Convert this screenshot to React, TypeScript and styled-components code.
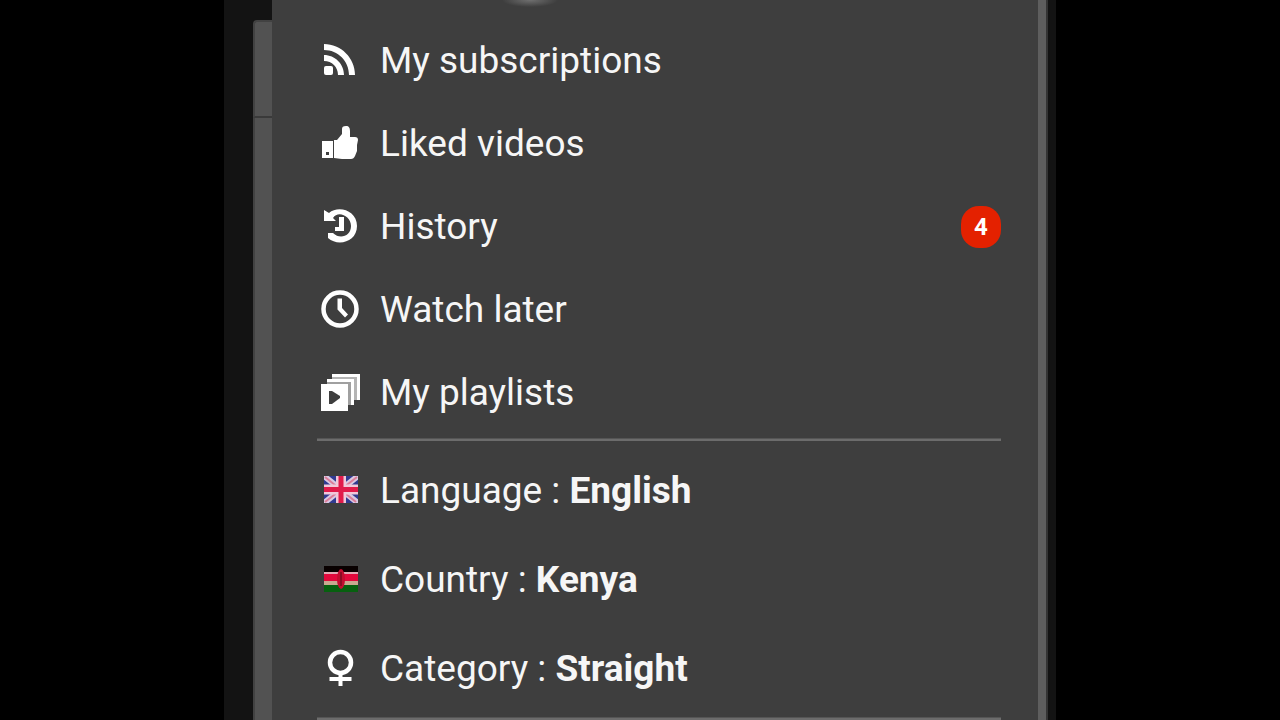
import React from "react";
import styled, { createGlobalStyle } from "styled-components";

const GlobalStyle = createGlobalStyle`
  * { box-sizing: border-box; }
  body { margin: 0; background: #000; }
`;

const Page = styled.div`
  display: flex;
  justify-content: center;
  min-height: 100vh;
  font-family: Roboto, "Liberation Sans", sans-serif;
  color: #f6f6f6;
`;

const Stage = styled.div`
  display: flex;
  width: 65%;
  padding: 0 8px 0 29px;
  background: #131313;
`;

const Rail = styled.aside`
  display: flex;
  flex-direction: column;
  flex: none;
  width: 19px;
  padding-top: 20px;
`;

const RailHeader = styled.div`
  height: 98px;
  background: #525252;
  border-top: 2px solid #424242;
  border-bottom: 2px solid #3a3a3a;
  border-left: 2px solid #424242;
  border-top-left-radius: 4px;
`;

const RailBody = styled.div`
  flex: 1;
  background: #525252;
  border-left: 2px solid #424242;
`;

const Panel = styled.nav`
  flex: 1;
  min-width: 0;
  padding: 19px 37px 0 45px;
  background: radial-gradient(ellipse 28px 7px at 258px 0, #707070, #3e3e3e) no-repeat #3e3e3e;
`;

const Track = styled.div`
  flex: none;
  width: 10px;
  background: #5e5e5e;
  border-right: 2px solid #343434;
`;

const Menu = styled.ul`
  list-style: none;
  margin: 0;
  padding: 0;
`;

const Item = styled.a<{ $tall?: boolean }>`
  display: flex;
  align-items: center;
  gap: 20px;
  height: ${(p) => (p.$tall ? 89 : 83)}px;
  padding-left: 3px;
  font-size: 37px;
  line-height: 42px;
  color: inherit;
  text-decoration: none;
`;

const Label = styled.span`
  flex: 1;
  white-space: nowrap;
`;

const Value = styled.strong`
  font-weight: 700;
`;

const Icon = styled.svg`
  flex: none;
  width: 40px;
  height: 40px;
  fill: #fff;
`;

const Badge = styled.span`
  width: 40px;
  height: 42px;
  border-radius: 18px;
  background: #e42100;
  color: #fff;
  font-size: 24px;
  font-weight: 700;
  line-height: 42px;
  text-align: center;
`;

const Divider = styled.hr`
  height: 3px;
  margin: 4px 0 5px;
  border: 0;
  border-top: 1px solid #555;
  background: #6c6c6c;
`;

const Feed = () => (
  <Icon viewBox="0 1 40 40" aria-hidden="true">
    <rect x="4" y="26" width="9" height="9" rx="2" />
    <path d="M4 15v6c8 0 14 6 14 14h6c0-11-9-20-20-20z" />
    <path d="M4 4v6c14 0 25 11 25 25h6c0-17-14-31-31-31z" />
  </Icon>
);

const ThumbUp = () => (
  <Icon viewBox="0 0 40 40" aria-hidden="true">
    <path fillRule="evenodd" d="M2 17h11v17H2zM6 28v3h3v-3z" />
    <path d="M14 16h3l5-6V5c0-2 1-3 4-3s4 2 4 5v6h5c2 0 3 1 3 3l-1 5v6l-2 5c-1 2-2 3-4 3H22c-3 0-5-1-8-1z" />
  </Icon>
);

const Rewind = () => (
  <Icon viewBox="0 1 40 40" aria-hidden="true">
    <path d="M4 4l5 3C18-1 37 4 37 20c0 16-19 21-29 12v-5h5c7 7 18 3 18-7S18 4 13 12l3 3H4z" />
    <path d="M19 11h5v14h-9v-4h4z" />
  </Icon>
);

const Clock = () => (
  <Icon viewBox="0 1 40 40" aria-hidden="true">
    <circle cx="20" cy="20" r="16.500" fill="none" stroke="#fff" strokeWidth="4.500" />
    <path d="M17.500 9.500h4.500V19l6 6.500-3 3-7.500-8z" />
  </Icon>
);

const Playlists = () => (
  <Icon viewBox="0 0 40 40" aria-hidden="true">
    <path fill="#b4b4b4" d="M12 1h28v26h-6V6H12z" />
    <path d="M12 1h28v26h-3V4H12z" />
    <path fill="#a0a0a0" d="M7 6h27v26h-6V11H7z" />
    <path d="M7 6h27v26h-3V9H7z" />
    <rect x="1" y="11" width="27" height="27" />
    <path d="M9 18h3l8 5v2l-8 6H9z" fill="#3e3e3e" />
  </Icon>
);

const UnionJack = () => (
  <Icon viewBox="0 1 40 40" aria-hidden="true">
    <rect x="4" y="6" width="34" height="27" fill="#303b91" />
    <path d="M4 6l34 27M38 6L4 33" stroke="#d9c9e3" strokeWidth="6" />
    <path d="M5 7l31 25M37 7L5 32" stroke="#dc7d98" strokeWidth="2" />
    <path d="M21 6v27M4 19.500h34" stroke="#f1c8d9" strokeWidth="10" />
    <path d="M21 6v27M4 19.500h34" stroke="#e11b4b" strokeWidth="5" />
    <path fill="#3e3e3e" d="M0 0h40v6H0zM0 33h40v8H0zM0 0h4v40H0zM38 0h2v40h-2z" />
  </Icon>
);

const KenyaFlag = () => (
  <Icon viewBox="0 0 40 40" aria-hidden="true">
    <rect x="4" y="6" width="34" height="6" fill="#080000" />
    <rect x="4" y="12" width="34" height="13" fill="#e0a9b5" />
    <rect x="4" y="14" width="34" height="7" fill="#e2083c" />
    <rect x="4" y="21" width="34" height="4" fill="#c9a990" />
    <rect x="4" y="25" width="34" height="7" fill="#07600f" />
    <ellipse cx="21" cy="19" rx="4" ry="10" fill="#c20d30" />
    <path d="M21 12v14" stroke="#8b0b24" strokeWidth="2" />
  </Icon>
);

const Venus = () => (
  <Icon viewBox="0 0 40 40" aria-hidden="true">
    <circle cx="20.500" cy="13.500" r="10.500" fill="none" stroke="#fff" strokeWidth="4.500" />
    <path d="M18.500 24h4v4h9v4h-9v5h-4v-5h-9v-4h9z" />
  </Icon>
);

const library = [
  { label: "My subscriptions", Glyph: Feed },
  { label: "Liked videos", Glyph: ThumbUp },
  { label: "History", Glyph: Rewind, count: 4 },
  { label: "Watch later", Glyph: Clock },
  { label: "My playlists", Glyph: Playlists },
];

const settings = [
  { label: "Language", value: "English", Glyph: UnionJack },
  { label: "Country", value: "Kenya", Glyph: KenyaFlag },
  { label: "Category", value: "Straight", Glyph: Venus },
];

export default function App() {
  return (
    <>
      <GlobalStyle />
      <Page>
        <Stage>
          <Rail>
            <RailHeader />
            <RailBody />
          </Rail>
          <Panel>
            <Menu>
              {library.map(({ label, Glyph, count }) => (
                <li key={label}>
                  <Item href="#">
                    <Glyph />
                    <Label>{label}</Label>
                    {count !== undefined && <Badge>{count}</Badge>}
                  </Item>
                </li>
              ))}
            </Menu>
            <Divider />
            <Menu>
              {settings.map(({ label, value, Glyph }) => (
                <li key={label}>
                  <Item href="#" $tall>
                    <Glyph />
                    <Label>
                      {label} : <Value>{value}</Value>
                    </Label>
                  </Item>
                </li>
              ))}
            </Menu>
            <Divider />
          </Panel>
          <Track />
        </Stage>
      </Page>
    </>
  );
}
